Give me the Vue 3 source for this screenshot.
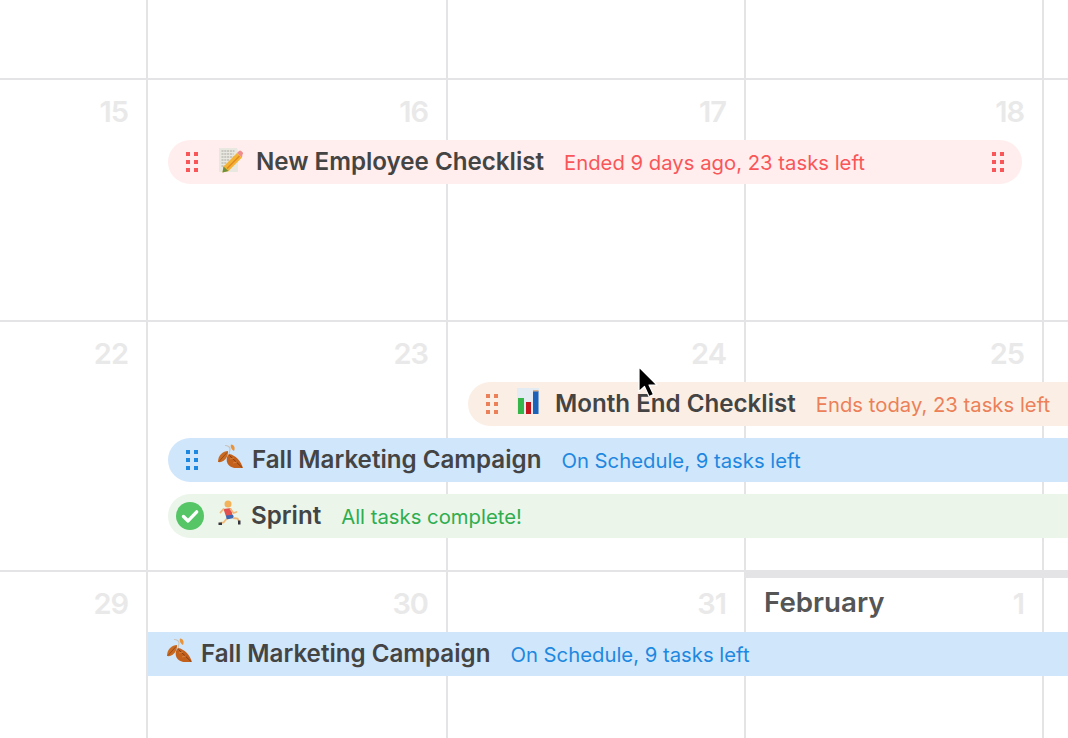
<script setup>
const weeks = [
  { days: ['', '', '', '', ''], bars: [] },
  {
    days: ['15', '16', '17', '18', ''],
    bars: [
      { title: 'New Employee Checklist', status: 'Ended 9 days ago, 23 tasks left', color: 'red', icon: 'memo', start: 2, end: 5, handleEnd: true },
    ],
  },
  {
    days: ['22', '23', '24', '25', ''],
    bars: [
      { title: 'Month End Checklist', status: 'Ends today, 23 tasks left', color: 'orange', icon: 'chart', start: 3, end: 6 },
      { title: 'Fall Marketing Campaign', status: 'On Schedule, 9 tasks left', color: 'blue', icon: 'leaves', start: 2, end: 6 },
      { title: 'Sprint', status: 'All tasks complete!', color: 'green', icon: 'runner', start: 2, end: 6, done: true },
    ],
  },
  {
    days: ['29', '30', '31', '1', ''],
    month: 'February',
    bars: [
      { title: 'Fall Marketing Campaign', status: 'On Schedule, 9 tasks left', color: 'blue', icon: 'leaves', start: 2, end: 6, flat: true },
    ],
  },
]
</script>

<template>
  <div class="calendar">
    <div v-for="(week, w) in weeks" :key="w" class="week" :class="'week-' + w">
      <div
        v-for="(day, d) in week.days"
        :key="d"
        class="cell"
        :class="{ 'cell-month': week.month && d === 3 }"
        :style="{ gridColumn: d + 1 }"
      >
        <span v-if="week.month && d === 3" class="month">{{ week.month }}</span>
        <span class="num">{{ day }}</span>
      </div>

      <div
        v-for="(bar, b) in week.bars"
        :key="bar.title"
        class="bar"
        :class="[bar.color, { flat: bar.flat, open: bar.end === 6 }]"
        :style="{ gridColumn: bar.start + ' / ' + bar.end, gridRow: b + 2 }"
      >
        <svg v-if="bar.done" class="check" viewBox="0 0 28 28">
          <circle cx="14" cy="14" r="14" fill="#55c566" />
          <path d="M7.5 14.5l4.6 4.4 8.6-9" fill="none" stroke="#fff" stroke-width="3.4" stroke-linecap="round" stroke-linejoin="round" />
        </svg>
        <svg v-else-if="!bar.flat" class="handle" viewBox="0 0 12 20">
          <path d="M0 0h4v4H0zM8 0h4v4H8zM0 8h4v4H0zM8 8h4v4H8zM0 16h4v4H0zM8 16h4v4H8z" fill="currentColor" />
        </svg>

        <svg v-if="bar.icon === 'memo'" class="icon icon-memo" viewBox="0 0 24 26">
          <path d="M0 1h18l1 4v20H0z" fill="#e8e7e0" />
          <path d="M2.5 4h13M2.5 7h12M2.5 10h13M2.5 13h8M2.500 16h5M2.500 19h4" stroke="#a5a59e" stroke-width="1.100" stroke-dasharray="2 .8" />
          <path d="M4.500 19.500L18 6l5 4.500L9.500 24l-6 1.500z" fill="#f5b335" />
          <path d="M9.500 24l-6 1.500 1-6z" fill="#6d8f3b" />
          <path d="M18 6l2-2a1.500 1.500 0 0 1 2.200 0l1.300 1.300a1.500 1.500 0 0 1 0 2.200L23 10.500z" fill="#ee8d8d" />
          <path d="M8 21.500L20.500 9" stroke="#df8a1f" stroke-width="1.300" />
        </svg>

        <svg v-else-if="bar.icon === 'chart'" class="icon icon-chart" viewBox="0 0 22 26">
          <path d="M0 0h22v26H0z" fill="#e3ebf3" />
          <path d="M1 10h6v16H1z" fill="#35b54a" />
          <path d="M9 14h5v12H9z" fill="#c4161c" />
          <path d="M16 3h5.500v23H16z" fill="#1c62b9" />
          <path d="M16 2h5.500v1.500H16z" fill="#d9b48a" />
        </svg>

        <svg v-else-if="bar.icon === 'leaves'" class="icon icon-leaves" viewBox="0 0 26 24">
          <path d="M8 1.500c3 0 5 1.500 5 3.500l-1 6" fill="none" stroke="#c9c2b8" stroke-width="1.100" />
          <path d="M14 .500c3 0 4.500 3 3 6.500-2-1-4-3.500-3-6.500z" fill="#e8943a" />
          <path d="M11 7C6 7 1 11 1 18c5 1 10.500-4 10-11z" fill="#c96a22" />
          <path d="M2 17.500L10 8.500" stroke="#8f4313" stroke-width=".8" />
          <path d="M12 10c6.500 1 12 7 14 14-6.500 1-14.500 0-16-6-.800-3 0-6 2-8z" fill="#c2601c" />
          <path d="M12.500 11.500L25 23.500" stroke="#7f3b10" stroke-width=".9" />
          <path d="M13 15l4-1M16 19l4-1" stroke="#dd8a45" stroke-width=".8" />
        </svg>

        <svg v-else-if="bar.icon === 'runner'" class="icon icon-runner" viewBox="0 0 24 26">
          <circle cx="10" cy="4" r="3.500" fill="#f2b35a" />
          <path d="M5.500 9l7.500-1 1.500 7.500-6.500 1z" fill="#e2504f" />
          <path d="M5.500 9L2.500 12.500" stroke="#f2b878" stroke-width="1.800" stroke-linecap="round" />
          <path d="M12.500 9l3 4 3-1" fill="none" stroke="#f2b878" stroke-width="1.800" stroke-linecap="round" />
          <path d="M8 15.500l7-.800 1 3.300-7.500 1.500z" fill="#3f66b0" />
          <path d="M8.500 19l-3 3.500-3 .500M15 18l4.500.500 1.500 3" fill="none" stroke="#f2b878" stroke-width="1.800" />
          <path d="M.500 22.500h3.500v2.500H.500zM20 20.500h2.500v4H20z" fill="#35353d" />
        </svg>

        <span class="title">{{ bar.title }}</span>
        <span class="status">{{ bar.status }}</span>

        <svg v-if="bar.handleEnd" class="handle handle-end" viewBox="0 0 12 20">
          <path d="M0 0h4v4H0zM8 0h4v4H8zM0 8h4v4H0zM8 8h4v4H8zM0 16h4v4H0zM8 16h4v4H8z" fill="currentColor" />
        </svg>
      </div>
    </div>

    <svg class="cursor" viewBox="0 0 24 34">
      <path d="M2 2v24.500l5.500-5 4.500 10 4.500-2-4.500-9.500H20z" fill="#000" stroke="#fff" stroke-width="1.200" stroke-linejoin="round" />
    </svg>
  </div>
</template>

<style scoped>
.calendar {
  position: relative;
  width: 1068px;
  height: 738px;
  overflow: hidden;
  background: #fff;
  font-family: Inter, "Open Sans", sans-serif;
}
.week {
  display: grid;
  grid-template-columns: 148px 300px 298px 298px 24px;
  grid-template-rows: 48px 44px 1fr;
  row-gap: 12px;
  box-sizing: border-box;
  border-bottom: 2px solid #e4e4e7;
}
.week-0 { height: 80px; grid-template-rows: 1fr; }
.week-1 { height: 242px; }
.week-2 { height: 250px; grid-template-rows: 48px 44px 44px 44px 1fr; }
.week-3 { height: 166px; border-bottom: 0; }
.cell {
  grid-row: 1 / -1;
  display: flex;
  justify-content: space-between;
  align-items: flex-start;
  box-sizing: border-box;
  min-width: 0;
  padding: 15px 18px 0;
  border-right: 2px solid #e4e4e7;
}
.cell:nth-child(5) { border-right: 0; }
.cell-month { position: relative; }
.cell-month::before {
  content: '';
  position: absolute;
  top: -2px;
  left: -2px;
  width: 324px;
  height: 8px;
  background: #e4e4e7;
}
.num {
  margin-left: auto;
  font-size: 29px;
  line-height: 34px;
  font-weight: 600;
  letter-spacing: -1px;
  color: #e9e9e9;
}
.month {
  margin-top: -2px;
  font-size: 27.7px;
  line-height: 34px;
  font-weight: 600;
  color: #555;
}
.bar {
  z-index: 1;
  display: flex;
  align-items: center;
  height: 44px;
  margin-left: 20px;
  margin-right: 22px;
  border-radius: 22px;
  white-space: nowrap;
}
.bar.open {
  margin-right: 0;
  border-radius: 22px 0 0 22px;
}
.bar.flat {
  margin: 0;
  border-radius: 0;
}
.red { background: #ffeeed; color: #f9565a; }
.orange { background: #fbefe5; color: #ec8058; }
.blue { background: #d0e6fb; color: #1e88e0; }
.green { background: #ebf5ea; color: #2fad4f; }
.handle {
  flex: none;
  width: 12px;
  height: 20px;
  margin-left: 18px;
}
.handle-end {
  margin-left: auto;
  margin-right: 18px;
}
.check {
  flex: none;
  width: 28px;
  height: 28px;
  margin-left: 8px;
}
.icon { flex: none; }
.icon-memo { width: 24px; height: 26px; margin: -4px 13px 0 21px; }
.icon-chart { width: 22px; height: 26px; margin: -6px 16px 0 19px; }
.icon-leaves { width: 26px; height: 24px; margin: -8px 9px 0 19px; }
.icon-runner { width: 24px; height: 26px; margin: -6px 9px 0 14px; }
.flat .icon-leaves { margin-left: 18px; }
.title {
  padding-bottom: 2px;
  font-size: 24.15px;
  font-weight: 600;
  color: #444;
}
.status {
  margin-left: 20px;
  padding-top: 1px;
  font-size: 20.3px;
}
.cursor {
  position: absolute;
  left: 637px;
  top: 365px;
  width: 24px;
  height: 34px;
  z-index: 2;
}
</style>

<style>
html, body { margin: 0; background: #fff; }
</style>
